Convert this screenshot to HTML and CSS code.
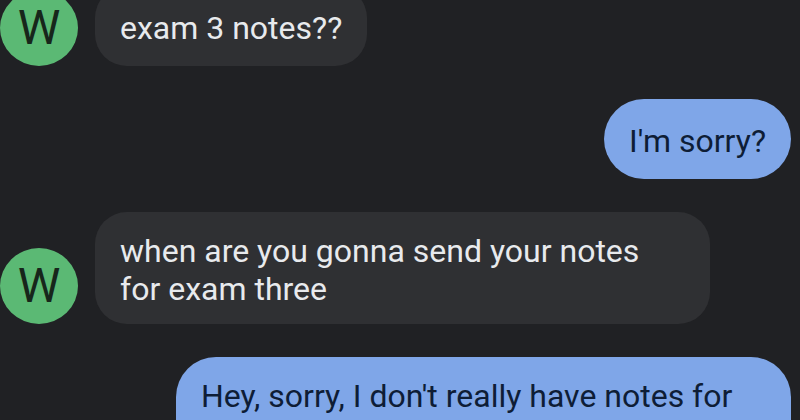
FILE: index.html
```html
<!DOCTYPE html>
<html lang="en">
<head>
<meta charset="utf-8">
<title>Messages</title>
<link rel="stylesheet" href="styles.css">
</head>
<body>
<main class="thread">
  <div class="row incoming">
    <div class="avatar">W</div>
    <div class="bubble dark">exam 3 notes??</div>
  </div>
  <div class="row outgoing">
    <div class="bubble blue">I'm sorry?</div>
  </div>
  <div class="row incoming">
    <div class="avatar">W</div>
    <div class="bubble dark">when are you gonna send your notes for exam three</div>
  </div>
  <div class="row outgoing">
    <div class="bubble blue">Hey, sorry, I don't really have notes for exam three, I think you have the wrong number</div>
  </div>
</main>
</body>
</html>
```

FILE: styles.css
```css
html, body {
  margin: 0;
  padding: 0;
  height: 100%;
  overflow: hidden;
  background: #202124;
}
body {
  font-family: Roboto, "Noto Sans", sans-serif;
}
.thread {
  display: flex;
  flex-direction: column;
  gap: 33px;
  margin-top: -14px;
}
.row {
  display: flex;
  align-items: flex-end;
}
.incoming {
  gap: 17px;
}
.outgoing {
  justify-content: flex-end;
  padding-right: 9px;
}
.avatar {
  flex: none;
  width: 78px;
  height: 76px;
  border-radius: 50%;
  background: #5bb974;
  color: #17261b;
  font-size: 48px;
  line-height: 76px;
  text-align: center;
}
.bubble {
  max-width: 615px;
  min-height: 80px;
  box-sizing: border-box;
  display: flex;
  align-items: center;
  font-size: 32px;
  line-height: 38px;
  padding: 20px 25px 16px 25px;
  border-radius: 40px;
}
.dark {
  background: #2f3033;
  color: #e8eaed;
}
.blue {
  background: #7fa6e8;
  color: #0e1d36;
}
.incoming .bubble {
  border-radius: 32px;
}
```
